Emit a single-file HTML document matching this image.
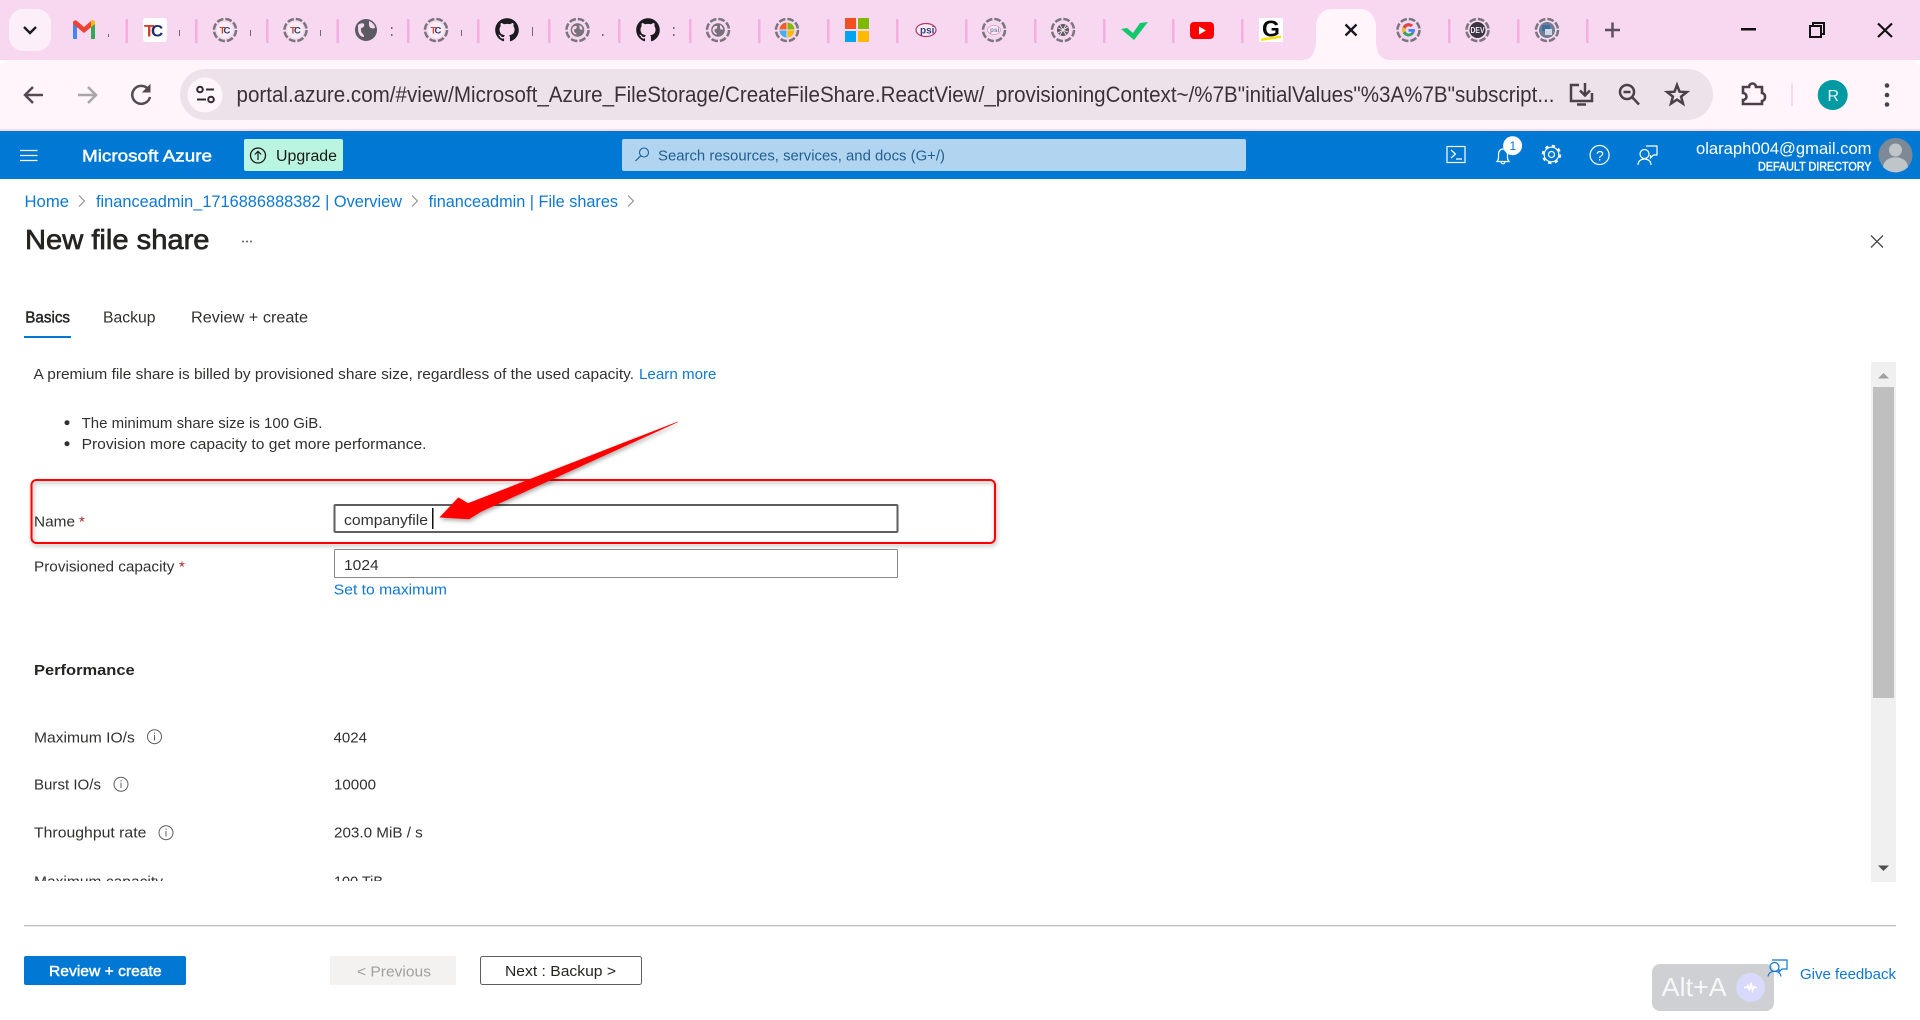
<!DOCTYPE html>
<html lang="en">
<head>
<meta charset="utf-8">
<title>New file share - Microsoft Azure</title>
<style>
html,body{margin:0;padding:0;background:#fff;width:1920px;height:1020px;overflow:hidden}
svg{display:block}
text{font-family:"Liberation Sans",sans-serif;white-space:pre}
.b{font-size:15px;fill:#323130}
.l{font-size:15px;fill:#0f78d3}
.c{font-size:17px;fill:#0f78d3}
.sb{stroke-width:.45px}
</style>
</head>
<body>
<svg width="1920" height="1020" viewBox="0 0 1920 1020" xmlns="http://www.w3.org/2000/svg">
<defs>
<circle id="ring" r="11" fill="none" stroke="#79757c" stroke-width="2.500" stroke-dasharray="6.640 2"/>
<g id="ghub"><path transform="translate(-11.800 -11.800) scale(1.475)" fill="#1b1b1f" d="M8 0C3.58 0 0 3.58 0 8c0 3.54 2.29 6.53 5.47 7.59.4.07.55-.17.55-.38 0-.19-.01-.82-.01-1.49-2.01.37-2.53-.49-2.69-.94-.09-.23-.48-.94-.82-1.13-.28-.15-.68-.52-.01-.53.63-.01 1.08.58 1.23.82.72 1.21 1.87.87 2.33.66.07-.52.28-.87.51-1.07-1.78-.2-3.64-.89-3.64-3.95 0-.87.31-1.59.82-2.15-.08-.2-.36-1.02.08-2.12 0 0 .67-.21 2.2.82.64-.18 1.32-.27 2-.27.68 0 1.36.09 2 .27 1.53-1.04 2.2-.82 2.2-.82.44 1.1.16 1.92.08 2.12.51.56.82 1.27.82 2.15 0 3.07-1.87 3.75-3.65 3.95.29.25.54.73.54 1.48 0 1.07-.01 1.93-.01 2.2 0 .21.15.46.55.38A8.013 8.013 0 0016 8c0-4.42-3.58-8-8-8z"/></g>
<g id="tcs"><use href="#ring"/><circle r="8" fill="#f9eef6"/><text x="-5.500" y="3.500" font-size="9.500" font-weight="700" fill="#d8412f">T</text><text x="-1.500" y="3.500" font-size="9.500" font-weight="700" fill="#2a3a7c">C</text></g>
<g id="globe"><use href="#ring"/><circle r="6.800" fill="#77727a"/><path d="M-4.500-3c3-2 4.500-1 3.500 1s-2.500 0-2.500 2.500 2.500 2 2.500 4c-2.500 0-4.500-2.500-4.500-5zM2-5c2 1 3 3 3 4.500-2 .5-3 0-3-2z" fill="#f8d7f0"/></g>
<clipPath id="clipRows"><rect x="0" y="700" width="1200" height="181"/></clipPath>
<filter id="sh" x="-5%" y="-20%" width="110%" height="150%"><feDropShadow dx="1" dy="2" stdDeviation="2" flood-color="#000" flood-opacity=".35"/></filter>
</defs>

<!-- tab strip -->
<rect width="1920" height="60" fill="#f8d7f0"/>
<rect x="9" y="9" width="42" height="42" rx="14" fill="#fdeff9"/>
<path d="M24 27l6 6 6-6" fill="none" stroke="#1f1a24" stroke-width="2.400"/>

<g fill="#f4aee4">
<rect x="125.500" y="19" width="2.500" height="24"/><rect x="195" y="19" width="2.500" height="24"/><rect x="266" y="19" width="2.500" height="24"/><rect x="336.500" y="19" width="2.500" height="24"/><rect x="407" y="19" width="2.500" height="24"/><rect x="477" y="19" width="2.500" height="24"/><rect x="548" y="19" width="2.500" height="24"/><rect x="618" y="19" width="2.500" height="24"/><rect x="689" y="19" width="2.500" height="24"/><rect x="758" y="19" width="2.500" height="24"/><rect x="827" y="19" width="2.500" height="24"/><rect x="896" y="19" width="2.500" height="24"/><rect x="965" y="19" width="2.500" height="24"/><rect x="1034" y="19" width="2.500" height="24"/><rect x="1103" y="19" width="2.500" height="24"/><rect x="1172" y="19" width="2.500" height="24"/><rect x="1241" y="19" width="2.500" height="24"/><rect x="1448" y="19" width="2.500" height="24"/><rect x="1517" y="19" width="2.500" height="24"/><rect x="1586" y="19" width="2.500" height="24"/>
</g>
<g fill="#6f6a70">
<rect x="108" y="34" width="1" height="3"/><rect x="179" y="30" width="1" height="6"/><rect x="250" y="30" width="1" height="6"/><rect x="320" y="30" width="1" height="6"/>
<rect x="391" y="27" width="1.500" height="2"/><rect x="391" y="34" width="1.500" height="2"/><rect x="461" y="30" width="1" height="6"/><rect x="532" y="27" width="1" height="9"/><rect x="602" y="34" width="1.500" height="2"/><rect x="673" y="27" width="1.500" height="2"/><rect x="673" y="34" width="1.500" height="2"/>
</g>

<!-- gmail -->
<g transform="translate(84 30)">
<path d="M-11-8V9h4V-3z" fill="#4285f4"/><path d="M11-8V9H7V-3z" fill="#34a853"/>
<path d="M-11-8c1-2 3-2 4-1L0-3l7-6c1-1 3-1 4 1v2L0 3-11-6z" fill="#ea4335"/>
<path d="M7-9c1-1 3-1 4 1v2L7-3z" fill="#fbbc04"/>
</g>
<!-- TC -->
<rect x="143" y="18" width="24" height="24" rx="3" fill="#fff"/>
<text x="144" y="36.500" font-size="17" font-weight="700" fill="#d8412f">T</text>
<text x="151" y="36.500" font-size="17" font-weight="700" fill="#1d2f6f">C</text>
<use href="#tcs" x="225" y="30"/><use href="#tcs" x="295.500" y="30"/>
<circle cx="366" cy="30" r="11" fill="#5a5a60"/>
<path d="M358 25c4-3 7-2 6 1s-3 0-3 4 3 3 3 7c-4 0-6-4-6-8zM369 21c3 1 6 4 6 7-3 1-6 0-6-3z" fill="#f8d7f0"/>
<use href="#tcs" x="436" y="30"/>
<use href="#ghub" x="507" y="30"/>
<use href="#globe" x="577.500" y="30"/>
<use href="#ghub" x="648" y="30"/>
<use href="#globe" x="718" y="30"/>
<!-- color ring -->
<g transform="translate(787 30)"><use href="#ring"/>
<path d="M-.5-.5V-7.500A7.500 7.500 0 0 0-7.500-.5z" fill="#f25c2a"/><path d="M.5-.5V-7.500A7.500 7.500 0 0 1 7.500-.5z" fill="#7fba00"/><path d="M-.5.5H-7.500A7.500 7.500 0 0 0-.5 7.500z" fill="#3db2ef"/><path d="M.5.5H7.500A7.500 7.500 0 0 1 .5 7.500z" fill="#ffb900"/></g>
<!-- ms -->
<rect x="845" y="18" width="11" height="11" fill="#f25022"/><rect x="858" y="18" width="11" height="11" fill="#7fba00"/><rect x="845" y="31" width="11" height="11" fill="#00a4ef"/><rect x="858" y="31" width="11" height="11" fill="#ffb900"/>
<!-- psi -->
<ellipse cx="926" cy="30" rx="10" ry="6.500" fill="#f9ecf5" stroke="#b8356e" stroke-width="1.200"/>
<text x="920" y="33.500" font-size="10" font-weight="700" fill="#34407c">psi</text>
<g transform="translate(994 30)"><use href="#ring"/><ellipse rx="6.500" ry="4.500" fill="#f9ecf5" stroke="#d69ab8" stroke-width=".8"/><text x="-4" y="2.200" font-size="6.500" font-weight="700" fill="#7a7fa8">psi</text></g>
<!-- knot -->
<g transform="translate(1063 30)"><use href="#ring"/><circle r="6" fill="#5e5a60"/><path d="M-5-2l10 4M-3-5l6 10M-5 3l10-6M3-5l-6 10" stroke="#f0e4ee" stroke-width=".9"/></g>
<!-- check -->
<path d="M1121 29l6-1 6 5 7-10 8-1-14 18z" fill="#0fc869"/>
<!-- youtube -->
<rect x="1190" y="22" width="24" height="17" rx="4" fill="#f00"/><path d="M1199 26.500l7 4-7 4z" fill="#fff"/>
<!-- G -->
<rect x="1259" y="18" width="24" height="24" fill="#fff"/>
<text x="1262" y="36.500" font-size="23" font-weight="700" fill="#0a0a0a">G</text>
<path d="M1261 38.500l20-3v2.500l-20 3z" fill="#f9e300"/>

<!-- active tab -->
<path d="M1301 60c9 0 13-4 15-16V27c0-10 6-18 16-18h28c10 0 16 8 16 18v17c2 12 6 16 15 16z" fill="#fff5fa"/>
<path d="M1345.500 24.500l11 11M1356.500 24.500l-11 11" stroke="#1b1620" stroke-width="2.300"/>

<!-- google -->
<g transform="translate(1408.500 30)"><use href="#ring"/>
<path d="M6-1H0v2.800h3.400A3.600 3.600 0 1 1 2.400-3L4.500-5A6.500 6.500 0 1 0 6.500 0z" fill="#4285f4"/>
<path d="M-5.600-3.300A6.500 6.500 0 0 1 4.500-5L2.400-3A3.600 3.600 0 0 0-3.300-1.300z" fill="#ea4335"/>
<path d="M-5.600 3.300A6.500 6.500 0 0 1-5.600-3.300L-3.300-1.300A3.600 3.600 0 0 0-3.300 1.300z" fill="#fbbc04"/>
<path d="M-5.600 3.300L-3.300 1.300A3.600 3.600 0 0 0 3.400 1.800L5.200 3.800A6.500 6.500 0 0 1-5.600 3.300z" fill="#34a853"/></g>
<g transform="translate(1477.500 30)"><use href="#ring"/><circle r="8" fill="#3b3740"/><text x="-7" y="3" font-size="8" font-weight="700" fill="#f4e9f1" textLength="14" lengthAdjust="spacingAndGlyphs">DEV</text></g>
<g transform="translate(1547 30)"><use href="#ring"/><circle r="8" fill="#6f7e92"/><rect x="-5" y="-5" width="8" height="6" fill="#3e6e9f"/><rect x="-2" y="-1" width="7" height="6" fill="#cfd8e3"/></g>
<path d="M1605 30h15M1612.500 22.500v15" stroke="#5c5060" stroke-width="2.500"/>

<!-- window controls -->
<rect x="1741" y="28" width="15" height="2.500" fill="#111"/>
<path d="M1813 26v-3h11v11h-3" fill="none" stroke="#111" stroke-width="2"/><rect x="1810" y="26" width="11" height="11" fill="none" stroke="#111" stroke-width="2"/>
<path d="M1878 23.500l14 13.500M1892 23.500l-14 13.500" stroke="#111" stroke-width="2.200"/>

<!-- toolbar -->
<path d="M0 131V70a10 10 0 0 1 10-10H1910a10 10 0 0 1 10 10V131z" fill="#fff5fa"/>
<rect y="129" width="1920" height="2" fill="#f5dce9"/>
<path d="M43 95H25M33 87l-8 8 8 8" fill="none" stroke="#544a52" stroke-width="2.500"/>
<path d="M78 95h18M88 87l8 8-8 8" fill="none" stroke="#aaa5a9" stroke-width="2.500"/>
<path d="M148.500 89.500A9 9 0 1 0 150 97" fill="none" stroke="#544a52" stroke-width="2.500"/><path d="M150 85v7h-7z" fill="#544a52" stroke="#544a52"/>
<rect x="180" y="69" width="1533" height="51" rx="25.500" fill="#ede2ea"/>
<circle cx="205" cy="95" r="17.500" fill="#fff5fa"/>
<g fill="none" stroke="#2f2a30" stroke-width="2"><circle cx="200" cy="89.500" r="2.800"/><path d="M206 89.500h8M197 99.500h9"/><circle cx="211" cy="99.500" r="2.800"/></g>
<text x="236.500" y="102" font-size="22" fill="#3b3239" textLength="1318" lengthAdjust="spacingAndGlyphs">portal.azure.com/#view/Microsoft_Azure_FileStorage/CreateFileShare.ReactView/_provisioningContext~/%7B"initialValues"%3A%7B"subscript...</text>
<g fill="none" stroke="#4a4048" stroke-width="2.500">
<path d="M1579 85H1571V101H1592V93M1577 104.500h9M1585 83v12M1580 90.500l5 5 5-5"/>
<circle cx="1627" cy="92" r="7"/><path d="M1632 97l7 7.500M1623.500 92h7"/>
<path d="M1677 85l2.500 6.700 7.300.4-5.700 4.500 1.900 7-6-4-6 4 1.900-7-5.700-4.500 7.300-.4z"/>
<path d="M1743 87h6a3.500 3.500 0 0 1 7 0h6v6a3.500 3.500 0 0 1 3 4 3.500 3.500 0 0 1-3 4v3h-19v-4a3.500 3.500 0 0 0 0-7z" stroke-width="2.600"/>
</g>
<rect x="1791" y="83" width="2" height="23" fill="#f8d7f0"/>
<circle cx="1832.700" cy="95" r="15" fill="#009aa2"/>
<text x="1827.500" y="101" font-size="16" fill="#e8f4f4">R</text>
<g fill="#4a4048"><circle cx="1887" cy="85.500" r="2.300"/><circle cx="1887" cy="95" r="2.300"/><circle cx="1887" cy="104.500" r="2.300"/></g>

<!-- azure header -->
<rect y="131" width="1920" height="48" fill="#0078d4"/>
<path d="M20 150.500h17.500M20 155.500h17.500M20 160.500h17.500" stroke="#fff" stroke-width="1.300"/>
<text x="82" y="161.500" font-size="17" fill="#fff" stroke="#fff" class="sb" textLength="130" lengthAdjust="spacingAndGlyphs">Microsoft Azure</text>
<rect x="244" y="139" width="99" height="32" rx="2" fill="#b9f5e0"/>
<circle cx="258" cy="155.500" r="7.500" fill="none" stroke="#1b1a19" stroke-width="1.300"/><path d="M258 160v-8.500M254.800 154.500l3.200-3.200 3.200 3.200" fill="none" stroke="#1b1a19" stroke-width="1.200"/>
<text x="276" y="161" font-size="15.500" fill="#1b1a19" textLength="61" lengthAdjust="spacingAndGlyphs">Upgrade</text>
<rect x="622" y="139" width="624" height="32" rx="2" fill="#b1d5f1"/>
<circle cx="644" cy="152.500" r="4.500" fill="none" stroke="#1d5f94" stroke-width="1.100"/><path d="M640.500 156l-5 5" stroke="#1d5f94" stroke-width="1.200"/>
<text x="658" y="160.500" font-size="15" fill="#22608f" textLength="287" lengthAdjust="spacingAndGlyphs">Search resources, services, and docs (G+/)</text>
<g fill="none" stroke="#fff" stroke-width="1.200">
<rect x="1447" y="146.500" width="18" height="16"/><path d="M1451 150l4.500 4-4.500 4M1456 159h6"/>
<path d="M1497 161.500c2-2 1.500-4 1.500-7 0-3.500 2-5.500 4.500-5.500s4.500 2 4.500 5.500c0 3 -.5 5 1.500 7zM1501 161.500c0 3 4 3 4 0"/>
<circle cx="1551.500" cy="154.500" r="7.300"/><circle cx="1551.500" cy="154.500" r="3"/><circle cx="1551.500" cy="154.500" r="8.800" stroke-width="1.800" stroke-dasharray="3.400 3.510"/>
<circle cx="1599.600" cy="155" r="9.500"/>
<circle cx="1644.500" cy="154" r="4.500"/><path d="M1638 165c0-8 13-8 13 0M1646 146h11v9h-3.500l-3 3v-3"/>
</g>
<text x="1596" y="160.500" font-size="14" fill="#fff">?</text>
<circle cx="1512.600" cy="145.700" r="9.500" fill="#fff"/>
<text x="1509.500" y="150" font-size="12" fill="#0078d4">1</text>
<text x="1696" y="154" font-size="17" fill="#fff" textLength="175.500" lengthAdjust="spacingAndGlyphs">olaraph004@gmail.com</text>
<text x="1758" y="170.500" font-size="12" fill="#fff" stroke="#fff" class="sb" textLength="113.500" lengthAdjust="spacingAndGlyphs">DEFAULT DIRECTORY</text>
<circle cx="1895.500" cy="155" r="17" fill="#7d8a96"/>
<circle cx="1895.500" cy="150" r="6.500" fill="#c0c5ca"/><path d="M1883 167c1-13 24-13 25 0a17 17 0 0 1-25 0z" fill="#c0c5ca"/>

<!-- breadcrumb -->
<text x="24.500" y="207" class="c" textLength="44.500" lengthAdjust="spacingAndGlyphs">Home</text>
<text x="96" y="207" class="c" textLength="306" lengthAdjust="spacingAndGlyphs">financeadmin_1716886888382 | Overview</text>
<text x="428.600" y="207" class="c" textLength="189.400" lengthAdjust="spacingAndGlyphs">financeadmin | File shares</text>
<path d="M79 195.500l5.500 5.500-5.500 5.500M412 195.500l5.500 5.500-5.500 5.500M628 195.500l5.500 5.500-5.500 5.500" fill="none" stroke="#8a8886" stroke-width="1"/>

<!-- title -->
<text x="25" y="249" font-size="28" fill="#252423" stroke="#252423" stroke-width=".7" textLength="184.500" lengthAdjust="spacingAndGlyphs">New file share</text>
<g fill="#605e5c"><circle cx="243" cy="241.500" r="1"/><circle cx="247" cy="241.500" r="1"/><circle cx="251" cy="241.500" r="1"/></g>
<path d="M1871 235.500l12 12M1883 235.500l-12 12" stroke="#4a4947" stroke-width="1.300"/>

<!-- tabs -->
<text x="25.300" y="322.700" font-size="15.500" fill="#252423" stroke="#252423" class="sb" textLength="44.700" lengthAdjust="spacingAndGlyphs">Basics</text>
<text x="103" y="322.700" font-size="15.500" fill="#323130" textLength="52.500" lengthAdjust="spacingAndGlyphs">Backup</text>
<text x="191" y="322.700" font-size="15.500" fill="#323130" textLength="117" lengthAdjust="spacingAndGlyphs">Review + create</text>
<rect x="24" y="336" width="47" height="2" fill="#0078d4"/>

<!-- info -->
<text x="33.500" y="379" class="b" textLength="600.500" lengthAdjust="spacingAndGlyphs">A premium file share is billed by provisioned share size, regardless of the used capacity.</text>
<text x="639" y="379" class="l" textLength="77.500" lengthAdjust="spacingAndGlyphs">Learn more</text>
<circle cx="67" cy="422.700" r="2.500" fill="#323130"/><circle cx="67" cy="443.700" r="2.500" fill="#323130"/>
<text x="81.600" y="427.800" class="b" textLength="240.800" lengthAdjust="spacingAndGlyphs">The minimum share size is 100 GiB.</text>
<text x="81.600" y="448.800" class="b" textLength="344.900" lengthAdjust="spacingAndGlyphs">Provision more capacity to get more performance.</text>

<!-- form -->
<text x="34" y="526.700" class="b" textLength="41" lengthAdjust="spacingAndGlyphs">Name</text>
<text x="79" y="526.700" font-size="15" fill="#a4262c">*</text>
<rect x="334.500" y="505" width="563" height="27" rx="1" fill="#fff" stroke="#605e5c" stroke-width="2"/>
<text x="344" y="525" class="b" textLength="84" lengthAdjust="spacingAndGlyphs">companyfile</text>
<rect x="432" y="508" width="1.500" height="21" fill="#111"/>

<text x="34" y="571.700" class="b" textLength="140.400" lengthAdjust="spacingAndGlyphs">Provisioned capacity</text>
<text x="179" y="571.700" font-size="15" fill="#a4262c">*</text>
<rect x="334.500" y="549.500" width="563" height="28" rx="1" fill="#fff" stroke="#8a8886" stroke-width="1"/>
<text x="344" y="570" class="b" textLength="34.700" lengthAdjust="spacingAndGlyphs">1024</text>
<text x="333.800" y="594.500" class="l" textLength="113.200" lengthAdjust="spacingAndGlyphs">Set to maximum</text>
<text x="34" y="675" font-size="15" fill="#252423" font-weight="700" textLength="100.700" lengthAdjust="spacingAndGlyphs">Performance</text>

<!-- rows -->
<g fill="none" stroke="#605e5c" stroke-width="1">
<circle cx="154.500" cy="736.700" r="7"/><path d="M154.500 735v5.500M154.500 732.500v1.300"/>
<circle cx="121" cy="784.300" r="7"/><path d="M121 782.600v5.500M121 780.100v1.300"/>
<circle cx="166" cy="832.700" r="7"/><path d="M166 831v5.500M166 828.500v1.300"/>
</g>
<text x="34" y="742.500" class="b" textLength="100.800" lengthAdjust="spacingAndGlyphs">Maximum IO/s</text>
<text x="333.500" y="742.500" class="b" textLength="33.500" lengthAdjust="spacingAndGlyphs">4024</text>
<text x="34" y="789.500" class="b" textLength="67" lengthAdjust="spacingAndGlyphs">Burst IO/s</text>
<text x="334" y="789.500" class="b" textLength="42" lengthAdjust="spacingAndGlyphs">10000</text>
<text x="34" y="837.500" class="b" textLength="112.400" lengthAdjust="spacingAndGlyphs">Throughput rate</text>
<text x="334" y="837.500" class="b" textLength="88.800" lengthAdjust="spacingAndGlyphs">203.0 MiB / s</text>
<g clip-path="url(#clipRows)">
<text x="34" y="886.500" class="b" textLength="129" lengthAdjust="spacingAndGlyphs">Maximum capacity</text>
<text x="334" y="886.500" class="b" textLength="49" lengthAdjust="spacingAndGlyphs">100 TiB</text>
</g>

<!-- scrollbar -->
<rect x="1871" y="362" width="25" height="520" fill="#f0f0f0"/>
<rect x="1873" y="387" width="21" height="311" fill="#bfbfbf"/>
<path d="M1878 378.500l5.500-5.500 5.500 5.500z" fill="#a0a0a0"/>
<path d="M1878 865.500l5.500 5.500 5.500-5.500z" fill="#505050"/>

<!-- footer -->
<rect x="24" y="925" width="1872" height="1.300" fill="#bdbdbd"/>
<rect x="24" y="956" width="162" height="29" rx="2" fill="#0078d4"/>
<text x="49" y="976" font-size="15" fill="#fff" stroke="#fff" class="sb" textLength="112.600" lengthAdjust="spacingAndGlyphs">Review + create</text>
<rect x="330" y="956" width="126" height="29" rx="2" fill="#f3f2f1"/>
<text x="357" y="976.700" font-size="15" fill="#a19f9d" textLength="74" lengthAdjust="spacingAndGlyphs">&lt; Previous</text>
<rect x="480.500" y="956.500" width="161" height="28" rx="2" fill="#fff" stroke="#605e5c"/>
<text x="505" y="976" font-size="15" fill="#252423" textLength="111" lengthAdjust="spacingAndGlyphs">Next : Backup &gt;</text>

<!-- Alt+A -->
<rect x="1652" y="964" width="122" height="47" rx="8" fill="#cfd0d3"/>
<text x="1661.700" y="996" font-size="26" fill="#f7f7f8" textLength="65" lengthAdjust="spacingAndGlyphs">Alt+A</text>
<circle cx="1750.700" cy="987.400" r="14.500" fill="#d8d9fb"/>
<path d="M1744 987.500h3l1-2 1.500 5 1.500-8 1.500 8 1.500-4 1 1h2" fill="none" stroke="#fff" stroke-width="1.500"/>
<g fill="none" stroke="#0f78d3" stroke-width="1.200">
<circle cx="1774.500" cy="967" r="4.500"/><path d="M1768 976.500c1-7 12-7 13 0M1772 960h15v9h-5l-3 3v-3"/>
</g>
<text x="1800" y="978.800" font-size="15" fill="#0f78d3" textLength="96" lengthAdjust="spacingAndGlyphs">Give feedback</text>

<!-- annotation -->
<rect x="31.500" y="480" width="963.500" height="63" rx="5" fill="none" stroke="#f00" stroke-width="2" filter="url(#sh)"/>
<path d="M677.500 422L468 503.500 458.400 497.700 440 517.300 469 519 481 511.500z" fill="#f00" stroke="#f00" stroke-width=".6" filter="url(#sh)"/>
</svg>
</body>
</html>
